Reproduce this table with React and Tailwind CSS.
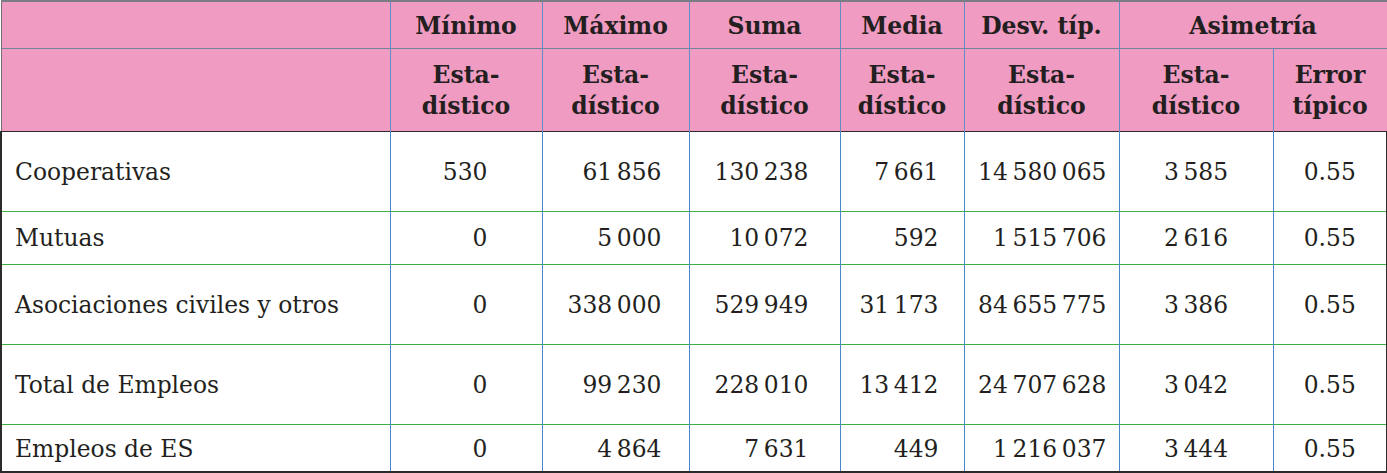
import React from 'react';

// Estadísticos descriptivos por tipo de entidad
const rows = [
    { label: 'Cooperativas', h: 'h-[80px]', v: ['530', '61\u2009856', '130\u2009238', '7\u2009661', '14\u2009580\u2009065', '3\u2009585', '0.55'] },
    { label: 'Mutuas', h: 'h-[53px]', v: ['0', '5\u2009000', '10\u2009072', '592', '1\u2009515\u2009706', '2\u2009616', '0.55'] },
    { label: 'Asociaciones civiles y otros', h: 'h-[80px]', v: ['0', '338\u2009000', '529\u2009949', '31\u2009173', '84\u2009655\u2009775', '3\u2009386', '0.55'] },
    { label: 'Total de Empleos', h: 'h-[80px]', v: ['0', '99\u2009230', '228\u2009010', '13\u2009412', '24\u2009707\u2009628', '3\u2009042', '0.55'] },
    { label: 'Empleos de ES', h: 'h-[48px]', v: ['0', '4\u2009864', '7\u2009631', '449', '1\u2009216\u2009037', '3\u2009444', '0.55'] },
];

// alineación de cada columna numérica
const cellAlign = [
    'text-right pr-[54px]',
    'text-right pr-[27px]',
    'text-right pr-[31px]',
    'text-right pr-[25px]',
    'text-right pr-[12px]',
    'text-center',
    'text-center',
];

const App = () => {
    const head = 'bg-[#f09bc2] font-bold text-[#231f20] text-center border-x border-x-[#5f8dc4]';

    return (
        <div className="bg-white w-[1387px] h-[473px] [font-family:'DejaVu_Serif']">
            <table className="table-fixed border-collapse w-[1386px] text-[23.4px] text-[#231f20] [font-family:'DejaVu_Serif']">
                <colgroup>
                    <col className="w-[389px]" />
                    <col className="w-[152px]" />
                    <col className="w-[147px]" />
                    <col className="w-[151px]" />
                    <col className="w-[124px]" />
                    <col className="w-[155px]" />
                    <col className="w-[154px]" />
                    <col className="w-[114px]" />
                </colgroup>
                <thead>
                    <tr className="h-[47px] border-t-2 border-t-[#7c7c84] border-b border-b-[#74849a] text-[23.5px] leading-[30px]">
                        <th className={`${head} pt-[3px] border-l border-l-[#6f6f74]`}></th>
                        <th className={`${head} pt-[3px]`}>Mínimo</th>
                        <th className={`${head} pt-[3px]`}>Máximo</th>
                        <th className={`${head} pt-[3px]`}>Suma</th>
                        <th className={`${head} pt-[3px]`}>Media</th>
                        <th className={`${head} pt-[3px]`}>Desv. típ.</th>
                        <th className={`${head} pt-[3px] border-r border-r-[#6f6f74]`} colSpan={2}>Asimetría</th>
                    </tr>
                    <tr className="h-[83px] border-b border-b-[#2b2b2b] text-[23.5px] leading-[31px]">
                        <th className={`${head} border-l border-l-[#6f6f74]`}></th>
                        {['Mínimo', 'Máximo', 'Suma', 'Media', 'Desv', 'Asim'].map((k) => (
                            <th key={k} className={`${head} pt-[3px]`}>Esta-<br />dístico</th>
                        ))}
                        <th className={`${head} pt-[3px] border-r border-r-[#6f6f74]`}>Error<br />típico</th>
                    </tr>
                </thead>
                <tbody>
                    {rows.map((r, i) => (
                        <tr
                            key={r.label}
                            className={`${r.h} ${i < rows.length - 1 ? 'border-b border-b-[#3fae45]' : 'border-b-2 border-b-[#2b2b2b]'}`}
                        >
                            <td className="pl-[13px] pt-[3px] border-l-2 border-l-[#2b2b2b] border-r border-r-[#4a86c8] whitespace-nowrap">
                                {r.label}
                            </td>
                            {r.v.map((val, j) => (
                                <td
                                    key={j}
                                    className={`pt-[3px] whitespace-nowrap ${cellAlign[j]} ${j === 6 ? 'border-r-2 border-r-[#2b2b2b]' : 'border-r border-r-[#4a86c8]'}`}
                                >
                                    {val}
                                </td>
                            ))}
                        </tr>
                    ))}
                </tbody>
            </table>
        </div>
    );
};

export default App;
